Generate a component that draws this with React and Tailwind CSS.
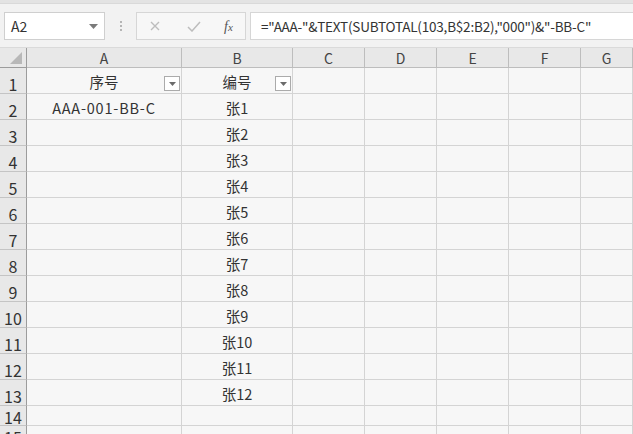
import React from 'react'

const cols = ['A', 'B', 'C', 'D', 'E', 'F', 'G']
const colW = ['w-[155px]', 'w-[111px]', 'w-[72px]', 'w-[72px]', 'w-[72px]', 'w-[72px]', 'flex-1']

const rows = [
  { n: 1, a: '序号', b: '编号', head: true },
  { n: 2, a: 'AAA-001-BB-C', b: '张1' },
  { n: 3, b: '张2' },
  { n: 4, b: '张3' },
  { n: 5, b: '张4' },
  { n: 6, b: '张5' },
  { n: 7, b: '张6' },
  { n: 8, b: '张7' },
  { n: 9, b: '张8' },
  { n: 10, b: '张9' },
  { n: 11, b: '张10' },
  { n: 12, b: '张11' },
  { n: 13, b: '张12' },
  { n: 14, short: true },
  { n: 15, short: true },
]

function FilterBtn() {
  return (
    <div className="absolute bottom-[2px] right-[1px] flex h-[15px] w-[16px] items-center justify-center border border-[#ababab] bg-white">
      <svg width="7" height="4" viewBox="0 0 7 4">
        <path d="M0 0h7L3.5 4z" fill="#6b6b6b" />
      </svg>
    </div>
  )
}

function FormulaBar() {
  return (
    <div className="flex h-[28px] shrink-0 items-stretch pl-[4px]">
      <div className="flex w-[101px] items-center justify-between border border-[#cfcfcf] bg-white pl-[6px] pr-[6px]">
        <span className="text-[14px] text-[#333]">A2</span>
        <svg width="9" height="5" viewBox="0 0 9 5">
          <path d="M0 0h9L4.5 5z" fill="#7a7a7a" />
        </svg>
      </div>
      <div className="flex w-[31px] flex-col items-center justify-center gap-[2px]">
        <span className="h-[2px] w-[2px] bg-[#b5b5b5]" />
        <span className="h-[2px] w-[2px] bg-[#b5b5b5]" />
        <span className="h-[2px] w-[2px] bg-[#b5b5b5]" />
      </div>
      <div className="flex w-[110px] items-center border border-[#d6d6d6] bg-[#f7f7f7]">
        <svg className="ml-[13px]" width="10" height="10" viewBox="0 0 10 10">
          <path d="M1 1l8 8M9 1l-8 8" stroke="#bdbdbd" strokeWidth="1.4" />
        </svg>
        <svg className="ml-[27px]" width="14" height="11" viewBox="0 0 14 11">
          <path d="M1 6l4 4 8-9" stroke="#bdbdbd" strokeWidth="1.5" fill="none" />
        </svg>
        <span className="ml-[23px] text-[14px] italic text-[#555]" style={{ fontFamily: '"Liberation Serif", serif' }}>
          f<span className="text-[11px]">x</span>
        </span>
      </div>
      <div className="ml-[4px] flex flex-1 items-center border border-r-0 border-[#d6d6d6] bg-white pl-[10px]">
        <span className="whitespace-nowrap text-[13.5px] tracking-[-0.2px] text-[#333]">
          ="AAA-"&amp;TEXT(SUBTOTAL(103,B$2:B2),"000")&amp;"-BB-C"
        </span>
      </div>
    </div>
  )
}

export default function App() {
  return (
    <div
      className="flex h-[434px] w-[633px] flex-col overflow-hidden bg-[#f2f2f2]"
      style={{ fontFamily: '"Noto Sans CJK SC", "Liberation Sans", sans-serif' }}
    >
      <div className="h-[4px] shrink-0 border-b border-[#d9d9d9] bg-[#e3e3e3]" />
      <div className="shrink-0 pt-[8px]">
        <FormulaBar />
      </div>
      <div className="mt-[5px] h-[3px] shrink-0 border-b border-[#dadada]" />

      <div className="flex h-[20px] shrink-0 bg-[#e8e8e8]">
        <div className="relative w-[27px] shrink-0 border-b border-r border-[#9c9c9c]">
          <svg className="absolute bottom-[3px] right-[4px]" width="12" height="12" viewBox="0 0 12 12">
            <path d="M12 0v12H0z" fill="#b8b8b8" />
          </svg>
        </div>
        {cols.map((c, i) => (
          <div
            key={c}
            className={`${colW[i]} flex shrink-0 items-end justify-center border-b border-r border-[#bdbdbd] pb-[1px] text-[14px] leading-[16px] text-[#444]`}
          >
            {c}
          </div>
        ))}
      </div>

      {rows.map((r) => (
        <div key={r.n} className={`flex shrink-0 ${r.short ? 'h-[20px]' : 'h-[26px]'}`}>
          <div
            className={`flex w-[27px] shrink-0 items-end justify-center border-b border-r border-[#c4c4c4] border-r-[#9c9c9c] bg-[#e8e8e8] text-[16px] text-[#333] ${r.short ? 'leading-[15px]' : 'leading-[17px]'}`}
          >
            {r.n}
          </div>
          {cols.map((c, i) => (
            <div
              key={c}
              className={`${colW[i]} relative flex shrink-0 items-center justify-center border-b border-r border-[#d4d4d4] bg-[#f7f7f7] pt-[3px] text-[14.5px] text-[#333] ${r.n === 2 && c === 'A' ? 'tracking-[0.8px]' : ''}`}
            >
              {c === 'A' ? r.a : c === 'B' ? r.b : null}
              {r.head && (c === 'A' || c === 'B') && <FilterBtn />}
            </div>
          ))}
        </div>
      ))}
    </div>
  )
}
